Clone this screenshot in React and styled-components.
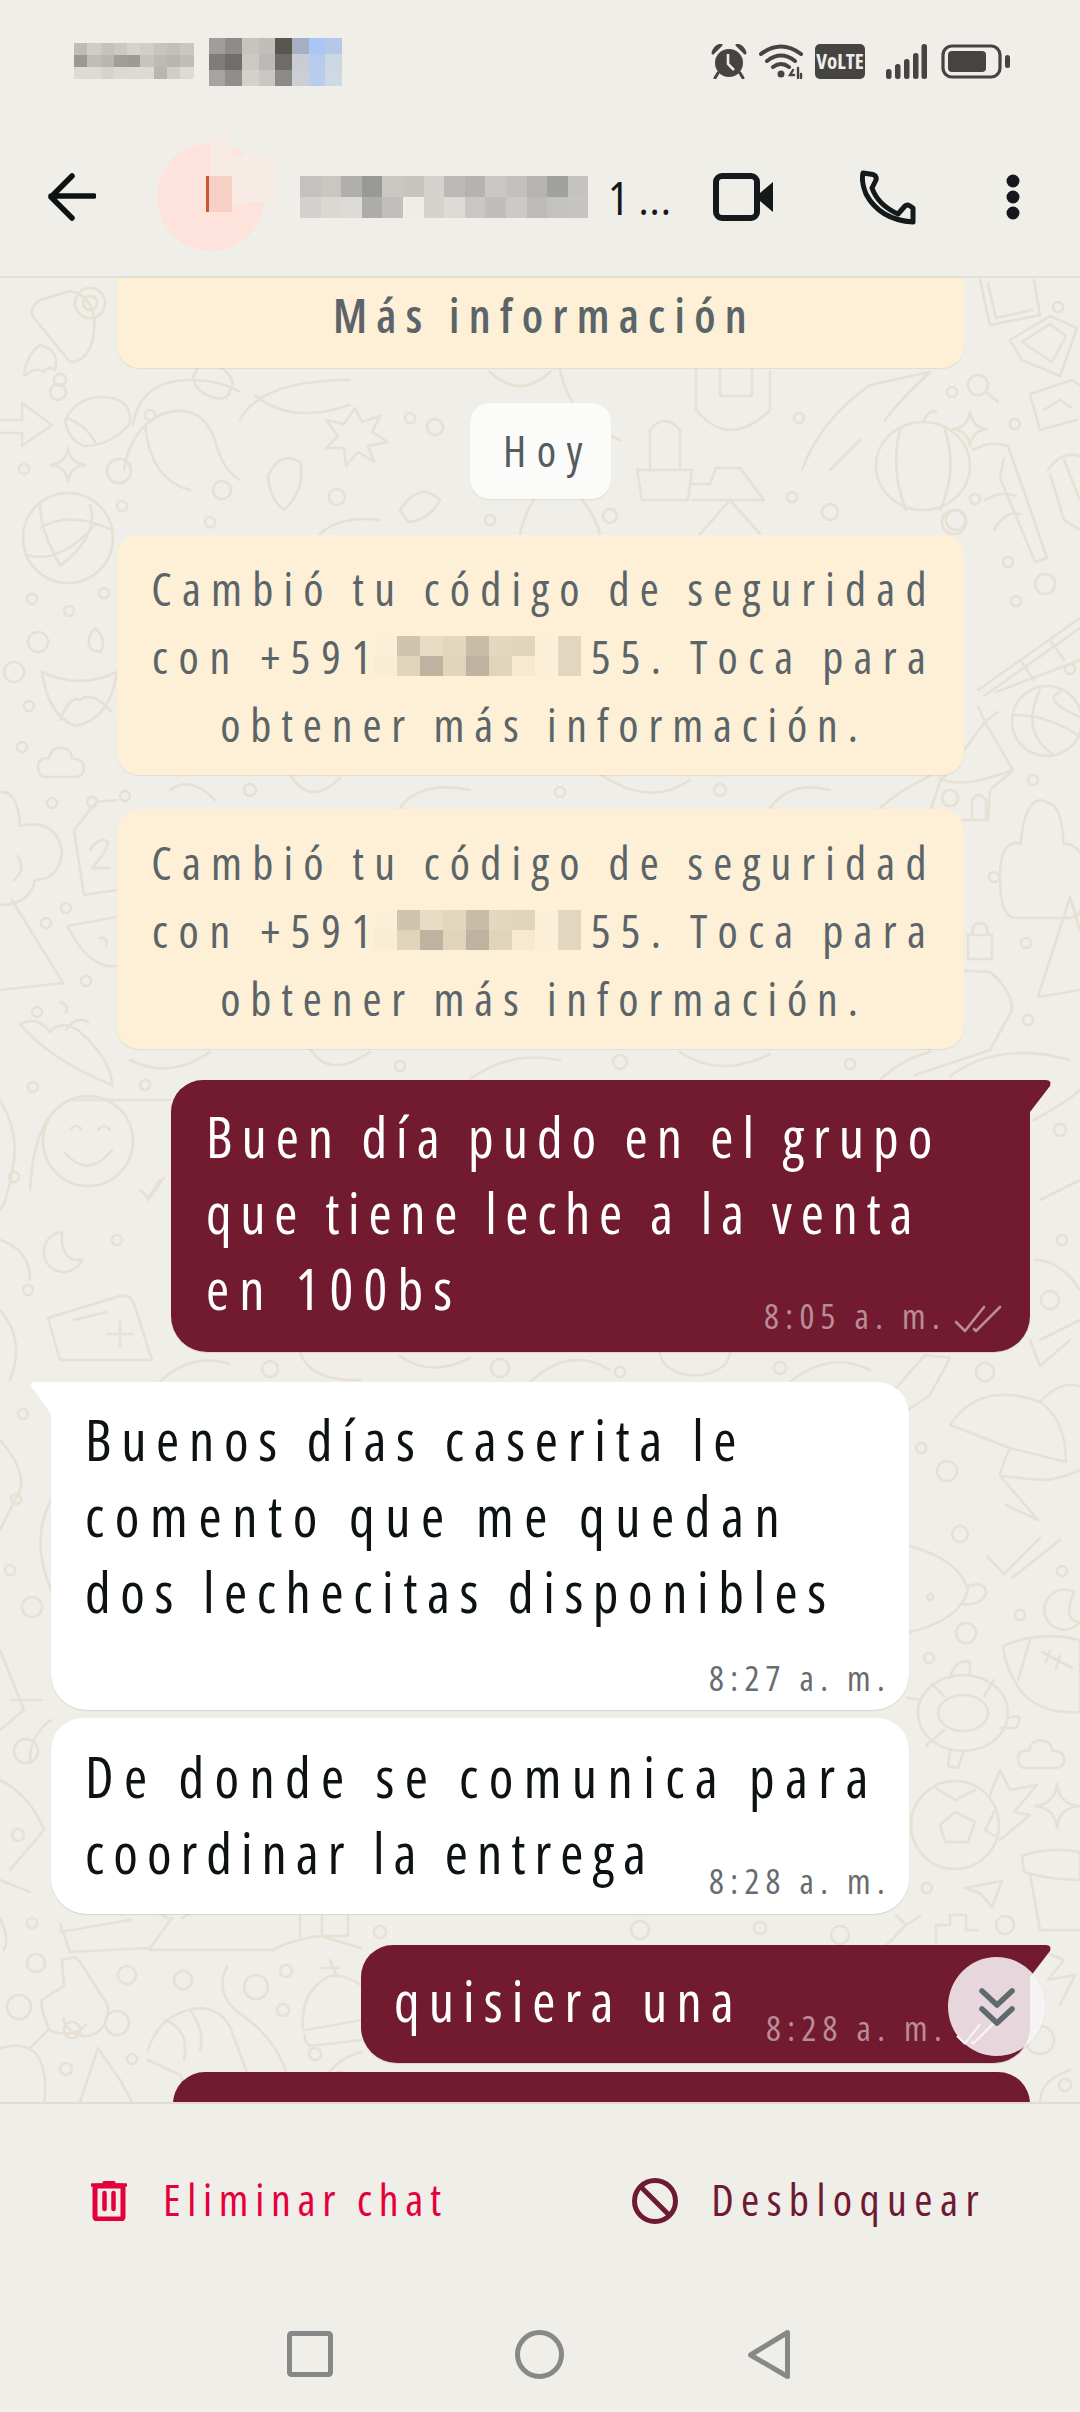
import React from "react";
import styled, { createGlobalStyle } from "styled-components";

const Global = createGlobalStyle`
  html, body { margin: 0; padding: 0; background: #f0eee8; }
  * { box-sizing: border-box; }
`;
const FONT = `"Open Sans", "Liberation Sans", sans-serif`;

const Phone = styled.div`
  width: 1080px; height: 2412px; overflow: hidden; background: #f0eee8;
  display: flex; flex-direction: column; font-family: ${FONT}; font-stretch: 75%;
`;
const StatusBar = styled.div`
  height: 125px; flex: none; display: flex; align-items: flex-start;
  padding: 38px 70px 0 74px;
`;
const StatusIcons = styled.div`
  margin-left: auto; padding-top: 6px; display: flex; align-items: center;
`;
const StatusSlot = styled.div`
  margin-left: ${p => p.$gap || 0}px; display: flex; height: 35px; align-items: center;
`;
const VolteBadge = styled.div`
  width: 50px; height: 35px; border-radius: 5px; background: #464442; color: #f0eee8;
  font-weight: 700; font-size: 21px; line-height: 35px; text-align: center;
`;
const Mosaic = styled.div`
  display: grid;
  grid-template-columns: repeat(${p => p.$cols}, ${p => p.$w}px);
  grid-auto-rows: ${p => p.$h}px;
  flex: none;
  margin: ${p => p.$margin || "0"};
`;
const Cell = styled.div`background: ${p => p.$c};`;

const Header = styled.div`
  height: 153px; flex: none; display: flex; align-items: center;
  border-bottom: 2px solid #e3e0d8; padding-bottom: 7px; position: relative;
`;
const BackSlot = styled.div`margin-left: 48px; display: flex;`;
const Avatar = styled.div`
  width: 108px; height: 108px; border-radius: 50%; background: #fde3dc;
  margin-left: 61px; position: relative; flex: none;
`;
const AvatarHalo = styled.div`
  position: absolute; left: 53px; top: -11px; width: 68px; height: 78px;
  background: #f5ebe5;
  clip-path: polygon(0 0, 32% 0, 32% 30%, 100% 30%, 100% 90%, 60% 90%, 0 100%);
  opacity: .9;
`;
const AvatarMark = styled.div`
  position: absolute; left: 49px; top: 33px; width: 26px; height: 36px;
  border-left: 3px solid #c75a35; background: #f8cfc4;
`;
const NameRow = styled.div`margin-left: 35px; display: flex; align-items: center; flex: none;`;
const NameTail = styled.div`
  margin-left: 20px; width: 59px; font-size: 46px; line-height: 46px; color: #14181a; letter-spacing: 1px; white-space: nowrap;
`;
const HeaderIcon = styled.div`margin-left: ${p => p.$gap}px; display: flex; flex: none;`;

const Chat = styled.div`
  flex: 1; min-height: 0; overflow: hidden; position: relative;
  display: flex; flex-direction: column;
`;
const Wallpaper = styled.svg`
  position: absolute; left: 0; top: 0; width: 1080px; height: 1824px;
  fill: none; stroke: #e7e0d4; stroke-width: 2.6; stroke-linecap: round; stroke-linejoin: round;
`;
const Card = styled.div`
  position: relative; align-self: center; width: 847px; flex: none; background: #fdf0d6;
  color: #5b6468; text-align: center; font-size: 46px; line-height: 68px;
  font-weight: ${p => (p.$bold ? 600 : 400)};
  border-radius: ${p => (p.$clipped ? "0 0 22px 22px" : "22px")};
  padding: ${p => p.$pad};
  margin-top: ${p => p.$mt}px;
  box-shadow: 0 1px 1px rgba(120, 110, 90, .14);
`;
const DayPill = styled.div`
  position: relative; align-self: center; flex: none; width: 141px; height: 96px; margin-top: 35px;
  background: #fbfbfa; border-radius: 20px; color: #545c60;
  font-size: 44px; line-height: 44px; text-align: center; padding: 25px 0 0 16px; letter-spacing: 10.5px;
  box-shadow: 0 1px 1px rgba(120, 110, 90, .14);
`;
const Line = styled.div`
  white-space: nowrap; letter-spacing: ${p => p.$ls}px;
`;
const CodeLine = styled.div`
  display: flex; justify-content: center; align-items: center; white-space: nowrap;
`;
const CodePart = styled.span`letter-spacing: ${p => p.$ls}px;`;
const Row = styled.div`
  position: relative; display: flex; flex: none; margin-top: ${p => p.$mt}px;
  justify-content: ${p => (p.$out ? "flex-end" : "flex-start")};
  padding: 0 50px 0 51px;
`;
const Bubble = styled.div`
  position: relative; width: ${p => p.$width}px; flex: none;
  min-height: ${p => p.$minH || 0}px;
  background: ${p => (p.$out ? "#721b30" : "#ffffff")};
  color: ${p => (p.$out ? "#ffffff" : "#0d1214")};
  font-size: 56px; line-height: 76px;
  padding: ${p => p.$pad};
  border-radius: ${p => (p.$tail ? (p.$out ? "32px 0 36px 36px" : "0 32px 36px 36px") : "32px 32px 36px 36px")};
  box-shadow: 0 1px 1px rgba(90, 80, 70, .16);
  ${p => p.$tail && `
    &::after {
      content: ""; position: absolute; top: 0; width: 22px; height: 34px; background: inherit;
      ${p.$out
        ? `left: 100%; clip-path: path('M0 0 H16 Q22 0 20 6 L0 32 Z');`
        : `right: 100%; clip-path: path('M22 0 H5 Q1 0 2 4 L22 32 Z');`}
    }`}
`;
const LastRow = styled.div`display: flex; justify-content: space-between; align-items: flex-end;`;
const Meta = styled.div`
  display: flex; align-items: flex-end; flex: none;
  font-size: 35px; line-height: 34px; white-space: nowrap; letter-spacing: 6.3px;
  color: ${p => (p.$out ? "#b98c97" : "#666c6f")};
  margin: ${p => p.$margin};
`;
const Ticks = styled.svg`
  margin-left: 8px; flex: none; fill: none; stroke-width: 2.6; stroke-linecap: round; stroke-linejoin: round;
  stroke: ${p => p.$c};
`;
const Fab = styled.div`
  position: absolute; left: 948px; top: 1679px; width: 97px; height: 99px; border-radius: 50%;
  background: rgba(248, 243, 246, .87); display: flex; align-items: center; justify-content: center;
  box-shadow: 0 1px 2px rgba(0, 0, 0, .08);
`;
const ActionBar = styled.div`
  height: 196px; flex: none; border-top: 2px solid #e0dcd4; display: flex; align-items: center;
  padding: 0 94px 0 91px;
`;
const Action = styled.div`
  display: flex; align-items: center; gap: ${p => p.$gap}px; color: ${p => p.$c};
  font-size: 44px; line-height: 44px; letter-spacing: ${p => p.$ls}px; white-space: nowrap;
  margin-left: ${p => (p.$end ? "auto" : "0")};
`;
const ActionLabel = styled.span`margin-bottom: 4px;`;
const NavBar = styled.div`
  height: 114px; flex: none; display: flex; align-items: center; padding: 0 0 2px 287px;
`;
const NavSlot = styled.div`display: flex; margin-left: ${p => p.$gap || 0}px;`;

const star4 = (x, y, s) =>
  `M${x} ${y - s}Q${x + 2} ${y - 2} ${x + s} ${y}Q${x + 2} ${y + 2} ${x} ${y + s}Q${x - 2} ${y + 2} ${x - s} ${y}Q${x - 2} ${y - 2} ${x} ${y - s}Z`;
const cloud = (x, y, w, h) =>
  `M${x + w * .18} ${y + h}Q${x} ${y + h} ${x} ${y + h * .68}Q${x} ${y + h * .38} ${x + w * .24} ${y + h * .42}Q${x + w * .3} ${y} ${x + w * .56} ${y + h * .1}Q${x + w * .72} ${y + h * .12} ${x + w * .74} ${y + h * .42}Q${x + w} ${y + h * .42} ${x + w} ${y + h * .72}Q${x + w} ${y + h} ${x + w * .8} ${y + h}Z`;

const DOTS = [
  [24,469,5],[58,392,8],[119,471,12],[122,506,5],[32,599,5],[69,611,5],[104,593,5],[38,642,10],[14,672,10],[29,706,5],[22,747,5],[52,803,5],
  [66,908,5],[46,923,5],[86,981,5],[37,1012,5],[33,1087,5],[145,1085,5],
  [952,392,5],[1058,307,5],[1015,424,5],[975,499,5],[956,520,10],[1008,562,5],[1045,584,10],[1016,601,5],[1070,669,5],[1033,780,5],[994,877,5],[1026,943,5],[1028,1020,5],
  [410,418,5],[435,427,8],[222,490,9],[337,497,8],[792,497,5],[830,512,8],[799,418,5],[954,522,12],[150,415,5],[60,380,6],
  [985,1372,9],[921,1448,5],[947,1471,10],[960,1534,8],[1020,1615,5],[966,1633,10],[1062,1571,5],[929,1658,5],[927,1888,5],[1005,1925,9],
  [23,1414,5],[16,1499,5],[10,1570,5],[32,1607,10],[26,1751,12],[18,1835,6],[32,1923,5],[36,1963,9],[19,2007,12],[117,2023,12],[127,1975,9],[183,1980,9],[256,1987,12],[286,1971,6],[283,2010,6],[132,2059,5],[66,2069,6],[315,2054,6],
  [14,1177,5],[117,1240,5],[28,1290,5],[1060,1130,6],[1050,1300,9],[1062,1240,5],[270,1369,8],[620,1372,5],[780,1368,6],[500,1368,9],
  [380,1932,6],[640,1930,9],[760,1928,6],[840,1935,9],[1040,2040,14],[1065,2085,6],[250,790,6],[560,792,5],[720,790,6],[850,1064,5],[400,1066,5],[620,1062,7],[490,520,5],[610,516,7],[210,522,5]
];

const PATHS = [
  "M34 318Q28 308 40 300L70 291Q100 298 93 338Q88 362 70 362Z","M24 376Q26 355 40 345Q60 350 55 370Q48 365 44 372Q36 366 24 376Z",
  "M90 288a15 15 0 1 0 .1 0M90 296a7 7 0 1 0 .1 0",
  "M0 420H22V403L52 425L22 446V433H0","M65 420Q80 392 112 398Q132 402 130 424Q110 446 84 446Q68 440 65 420Z M66 418Q86 424 96 444","M133 425Q140 380 190 380Q220 380 240 392M145 425Q150 480 190 490",
  star4(68,465,17), star4(970,429,17), star4(1057,1806,22),
  "M23 538a45 45 0 1 0 90 0a45 45 0 1 0 -90 0ZM40 528Q70 510 112 530M27 555Q60 565 96 524M60 565Q40 530 40 504M90 505Q100 535 60 566",
  "M42 672Q80 690 117 672Q110 720 75 726Q48 715 42 672ZM92 650Q84 640 95 628Q108 640 100 652ZM60 720Q70 695 80 700Q92 690 112 712",
  cloud(38,745,46,32), cloud(1018,1738,46,30),
  "M0 792Q18 790 20 826Q55 818 62 850Q60 880 35 880Q30 905 0 905M18 856Q26 870 14 880",
  "M74 830L96 802L117 800M74 830L84 895L117 890M90 850Q100 835 108 842Q108 850 92 868H110","M92 797a5 5 0 1 0 .1 0M125 791a5 5 0 1 0 .1 0",
  "M12 900L63 983L0 990",
  "M67 926Q90 970 117 966M67 926L117 917M100 938Q108 936 106 946",
  "M20 1024Q50 1060 112 1085Q112 1060 78 1030Q60 1020 50 1032Q38 1015 20 1024ZM66 1012Q70 1006 60 1002","M66 1030Q76 1015 88 1022",
  "M43 1141a45 45 0 1 0 90 0a45 45 0 1 0 -90 0ZM64 1152Q88 1180 112 1150M70 1130q6 -8 12 0M98 1130q6 -8 12 0","M30 1190Q34 1115 70 1100L170 1100",
  "M0 1100Q18 1130 14 1160Q8 1200 0 1210",
  "M140 1190L148 1198L160 1180M148 1200L164 1178","M62 1232a20 20 0 1 0 20 28Q60 1262 62 1232Z",
  "M48 1318L120 1296Q130 1294 134 1304L152 1360H60ZM74 1320L106 1312M108 1334H132M120 1322V1346",
  "M0 1240Q30 1250 30 1280","M0 1310Q26 1340 10 1380",
  "M980 280L990 325L1040 315L1034 280M988 284L996 318L1032 310","M1010 340L1050 316L1077 328L1060 376L1022 360ZM1022 342L1050 324L1066 336L1052 362Z",
  "M968 385a10 10 0 1 0 20 0a10 10 0 1 0 -20 0M986 392L998 402",
  "M1030 394L1072 380L1080 385M1030 394L1040 430L1076 420M1044 410L1060 400L1072 408",
  "M876 466a47 44 0 1 0 94 0a47 44 0 1 0 -94 0ZM900 430Q890 470 906 510M945 430Q958 470 940 510M923 422Q930 408 936 412",
  "M973 450Q990 440 1008 446L1034 520L1047 558L1035 562L1000 478L1004 458M985 500Q1000 490 1016 496M994 530Q1006 510 1020 514",
  "M1048 470Q1062 450 1080 456M1050 474L1064 520L1080 530M1064 460L1080 500",
  "M978 690L1080 618M984 696L1080 628M1050 640L1064 660M1020 660L1034 680","M996 692L1080 660",
  "M1012 721a35 35 0 1 0 70 0M1012 721a35 35 0 1 1 70 0M1014 715Q1050 715 1082 738M1040 690Q1020 730 1052 754M1060 692Q1040 700 1082 718",
  "M927 820L940 782L985 722L1013 770L990 790L988 820ZM985 722L978 706M985 722L998 712M950 790a8 8 0 1 0 .1 0M972 820V800Q978 790 986 800V820","M940 778Q960 790 1012 770",
  cloud(1000,790,86,128),
  "M1038 997L1070 897L1080 930M1038 997L1080 990",
  "M968 935h24v24h-24zM972 935q0 -12 8 -12q8 0 8 12",
  "M912 968L990 972Q1012 990 1012 1010L990 1050L915 1075","M900 1030L930 1050",
  "M950 1076Q1000 1040 1070 1060",
  "M196 372a20 12 30 1 0 34 18a20 12 30 1 0 -34 -18Z","M124 470Q130 430 160 415Q200 400 215 440Q222 470 240 480","M240 420Q260 380 350 380M255 395Q290 425 350 405",
  "M355 408L362 422L380 416L372 432L388 442L368 446L374 462L358 452L346 466L344 448L326 448L338 436L326 420L344 424Z",
  "M268 476Q280 450 300 462Q306 490 284 510Q270 500 268 476Z","M400 510Q420 480 440 500Q430 520 408 522Z",
  "M637 470H692L688 500H642ZM650 470V430Q664 412 680 430V470","M692 500H764L740 468H716L710 484H692","M696 370V410Q730 450 770 410V372M720 370V396H752V370",
  "M802 470Q820 420 870 385L930 372Q900 400 885 420M830 470L860 440","M560 370Q570 420 620 440M490 372Q520 400 550 372",
  "M520 534Q530 490 560 480Q590 500 600 534","M700 534L730 500L760 534","M320 534Q340 515 380 520",
  "M170 790Q190 775 215 800M290 774Q310 808 340 778M400 808Q420 780 470 790M600 774Q650 808 690 780M770 808Q790 780 830 790M880 808Q900 790 930 776",
  "M130 1060Q170 1080 210 1052M310 1049Q330 1080 370 1052M470 1079Q510 1050 560 1060M680 1052Q720 1079 770 1054M880 1080Q900 1060 930 1052",
  "M160 1382Q190 1352 230 1364M300 1352Q310 1382 360 1380M400 1356Q430 1378 470 1358M530 1382Q570 1345 610 1370M660 1352a30 20 0 0 0 70 0M790 1382Q830 1350 870 1370",
  "M950 1425Q980 1380 1040 1402Q1066 1420 1066 1462L1010 1448ZM1010 1448Q1000 1470 1000 1476L1040 1480Q1060 1480 1080 1470M1000 1476L1038 1520L1006 1505M1040 1402Q1060 1380 1080 1386",
  "M890 1395L925 1355L950 1358L930 1395L905 1412","M1030 1340L1040 1366L1070 1340",
  "M987 1556L1004 1574L1040 1538M1012 1578L1060 1540",
  "M1074 1592a20 20 0 1 0 6 30Q1062 1622 1074 1592Z",
  "M910 1546Q960 1560 968 1590Q960 1620 910 1632M968 1586Q986 1580 986 1594Q980 1606 962 1604","M930 1594a3 3 0 1 0 .1 0",
  "M1003 1646Q1040 1630 1080 1640V1712Q1040 1715 1020 1690Q1005 1668 1003 1646ZM1030 1640L1018 1680M1042 1652L1072 1668M1050 1650L1046 1662M1060 1656L1056 1668",
  "M918 1713a45 38 0 1 0 90 0a45 38 0 1 0 -90 0ZM938 1713a25 18 0 1 0 50 0a25 18 0 1 0 -50 0ZM1008 1718Q1026 1712 1016 1728H1000M950 1678Q955 1658 970 1662L970 1676M950 1750L948 1766L958 1768L964 1750M920 1700L908 1698M944 1696L932 1684M984 1696L994 1680M944 1730L926 1746",
  "M911 1825a44 44 0 1 0 88 0a44 44 0 1 0 -88 0ZM940 1825L955 1812L975 1822L968 1842H945ZM936 1788L955 1800L975 1790M995 1810L985 1830L998 1838","M990 1795L1000 1770L1010 1790L1037 1785L1014 1812L1030 1815L1000 1840",
  "M965 1888L1002 1881L992 1907L980 1893Z","M1022 1856Q1050 1846 1080 1852V1880Q1050 1880 1024 1872ZM1030 1874L1040 1930H1080",
  "M882 1950L906 1925L896 1915M906 1925L920 1916","M936 1945V1925H950V1915H966V1930H978","M1040 1950L1064 1960L1048 1980L1075 1975L1060 2005","M1070 2070Q1040 2080 1040 2102",
  "M63 2018a22 24 0 1 0 44 -14L80 1962L75 1957L62 1960L64 1986L42 2000Q40 2010 50 2030Q70 2040 86 2025M72 2022a8 8 0 1 0 .1 0M48 2030L30 2048","M0 2048Q30 2040 40 2060Q48 2080 44 2102","M98 2048L120 2080L132 2102M98 2048L80 2102",
  "M148 2050Q160 2012 200 2008Q226 2010 233 2035L258 2102M165 2020Q190 2030 184 2060M190 2010Q205 2030 200 2050M148 2060L180 2075L195 2102",
  "M227 1967Q215 1990 235 2010Q280 2040 288 2080L280 2102",
  "M303 2030Q300 1990 330 1976Q345 1974 361 1985M306 2030L361 2020M305 2035Q303 2040 310 2046L361 2040M330 1960l6 14M322 1968l16 0",
  "M60 1924L70 1952L150 1948L172 1918M150 1950L273 1950Q290 1940 320 1936L361 1948M300 1936V1916M322 1916V1936H348V1916","M182 1918a18 14 0 1 0 -14 0","M0 1918Q10 1940 4 1950","M60 1932L130 1920",
  "M310 2100Q330 2060 361 2052M340 2072a12 12 0 1 0 .1 0",
  "M0 1440Q26 1470 20 1490L0 1530","M0 1650L24 1710L0 1730","M51 1500Q30 1540 51 1590","M0 1780Q30 1795 44 1830L10 1870","M51 1720Q30 1735 30 1760","M12 1700h30","M0 1880L30 1892",
  "M1034 1120Q1070 1100 1080 1090","M1040 1200L1080 1180M1036 1260Q1060 1260 1080 1290","M1040 1340L1080 1320",
];

const Doodles = () => (
  <Wallpaper viewBox="0 278 1080 1824" aria-hidden="true">
    {PATHS.map((d, i) => <path key={i} d={d} />)}
    {DOTS.map(([x, y, r], i) => <circle key={i} cx={x} cy={y} r={r} />)}
  </Wallpaper>
);

const Pixelated = ({ cols, w, h, colors, margin }) => (
  <Mosaic $cols={cols} $w={w} $h={h} $margin={margin}>
    {colors.map((c, i) => <Cell key={i} $c={c} />)}
  </Mosaic>
);

const CLOCK_A = ["#bdbcb7","#cfcdc8","#c4c2bd","#cbc9c4","#d5d3ce","#d0cec9","#c7c5c0","#c2c0bb","#c9c7c2","#9a9994","#bfbdb8","#b9b7b2","#9f9e99","#9c9b96","#c6c4bf","#bcbab5","#b8b6b1","#bfbdb8","#dddbd6","#dddbd6","#d5d3ce","#dbd9d4","#dddbd6","#dcdad5","#b8b6b1","#d0cec9","#dddbd6"];
const CLOCK_B = ["#9f9e9a","#8d8c88","#c6c4bf","#c0beb9","#57564f","#a5b0c2","#aac6f6","#b5c9e6","#7e7d79","#6f6e6a","#cbc9c4","#bcbab6","#6d6c68","#c9cdd3","#b6cbef","#cdd7e3","#a5a4a0","#8f8e8a","#d3d1cc","#c9c7c2","#8b8a86","#cbcfd5","#b8cdee","#cfd9e4"];
const NAME_M = ["#c3c2be","#c8c7c2","#b0afab","#999995","#c9c8c3","#c6c5c0","#d4d3ce","#bab9b5","#b4b3af","#c9c8c4","#c2c1bd","#b5b4b0","#a0a09c","#c4c3bf","#d2d1cd","#d9d8d3","#dcdbd6","#adaca8","#c0bfbb","#efede7","#d4d3ce","#dbdad5","#c9c8c4","#bfbeba","#cbcac6","#bcbbb7","#c3c2be","#c6c5c1"];
const CODE_M = ["#fcefd7","#cfc5ae","#e8ddc4","#e3d8be","#c8bda6","#e3d8be","#e0d5bb","#fcefd7","#e2d7be","#faedd5","#e0d5bb","#bdb3a0","#e0d5bb","#bdb3a0","#e0d5bb","#f6e9d0","#fcefd7","#e2d7be"];

const Arrow = () => (
  <svg width="48" height="48" viewBox="0 0 48 48" fill="none" stroke="#0d1214" strokeWidth="5.5" strokeLinecap="round" strokeLinejoin="round">
    <path d="M24 3L3 24L24 45M3 23H46" />
  </svg>
);
const VideoIcon = () => (
  <svg width="61" height="48" viewBox="0 0 61 48" fill="none">
    <rect x="3" y="3" width="41" height="42" rx="6" stroke="#14191b" strokeWidth="6" />
    <path d="M47 20L60 9V39L47 28Z" fill="#14191b" />
  </svg>
);
const PhoneIcon = () => (
  <svg width="56" height="55" viewBox="0 0 56 55" fill="none" stroke="#14191b" strokeWidth="5" strokeLinejoin="round">
    <path d="M3 3L13 4.5Q17 6 16 10L12 18Q18 35 38 44L45 36Q47 34 50 36L53 38V52Q20 50 6 24Q1 12 3 3Z" />
  </svg>
);
const Kebab = () => (
  <svg width="14" height="46" viewBox="0 0 14 46" fill="#15191b">
    <circle cx="7" cy="7" r="6.5" /><circle cx="7" cy="23" r="6.5" /><circle cx="7" cy="39" r="6.5" />
  </svg>
);
const ST = "#464442";
const AlarmIcon = () => (
  <svg width="36" height="35" viewBox="0 0 36 35">
    <circle cx="18" cy="19" r="14" fill={ST} />
    <path d="M2 9Q4 2 10 1L2 9ZM34 9Q32 2 26 1Z" fill={ST} stroke={ST} strokeWidth="3" strokeLinejoin="round" />
    <path d="M7 29L4 34M29 29L32 34" stroke={ST} strokeWidth="3" strokeLinecap="round" />
    <path d="M17 10V20L23 26" fill="none" stroke="#f0eee8" strokeWidth="2.6" />
  </svg>
);
const WifiIcon = () => (
  <svg width="45" height="35" viewBox="0 0 45 35" fill="none" stroke={ST} strokeWidth="4" strokeLinecap="round">
    <path d="M2 10Q22 -5 42 10M8 17Q22 6 36 17M14 23Q22 17 30 23" />
    <circle cx="22" cy="30" r="3.5" fill={ST} stroke="none" />
    <path d="M34 26L31 31H35M39 24V34M42 30V34" strokeWidth="2.4" />
  </svg>
);
const SignalIcon = () => (
  <svg width="41" height="35" viewBox="0 0 41 35" fill={ST}>
    <rect x="0" y="25" width="5.5" height="10" rx="2.5" /><rect x="9" y="20" width="5.5" height="15" rx="2.5" />
    <rect x="18" y="15" width="5.5" height="20" rx="2.5" /><rect x="27" y="9" width="5.5" height="26" rx="2.5" />
    <rect x="35.5" y="0" width="5.5" height="35" rx="2.5" />
  </svg>
);
const BatteryIcon = () => (
  <svg width="69" height="35" viewBox="0 0 69 35" fill="none">
    <rect x="2" y="2" width="57" height="31" rx="9" stroke={ST} strokeWidth="3.2" />
    <rect x="7" y="7" width="38" height="21" rx="4" fill={ST} />
    <rect x="64" y="11" width="5" height="13" rx="2.5" fill={ST} />
  </svg>
);
const TickMark = ({ c, w = 48 }) => (
  <Ticks $c={c} width={w} height={(w * 28) / 48} viewBox="0 0 48 28">
    <path d="M2 17L11 26L30 2M20 24L22 26L46 2" />
  </Ticks>
);
const Chevrons = () => (
  <svg width="36" height="38" viewBox="0 0 36 38" fill="none" stroke="#5f6a6e" strokeWidth="5.5" strokeLinecap="round" strokeLinejoin="round">
    <path d="M3 3L18 17L33 3M3 21L18 35L33 21" />
  </svg>
);
const TrashIcon = () => (
  <svg width="36" height="40" viewBox="0 0 36 40" fill="none" stroke="#e4003c" strokeLinecap="round">
    <path d="M1 4H35" strokeWidth="3.5" /><path d="M13 1.5H23" strokeWidth="3" />
    <rect x="4" y="5" width="28" height="33" rx="2" strokeWidth="5" />
    <path d="M13.5 12V28M22.5 12V28" strokeWidth="4.5" />
  </svg>
);
const BanIcon = () => (
  <svg width="46" height="46" viewBox="0 0 46 46" fill="none" stroke="#6e1a33" strokeWidth="5">
    <circle cx="23" cy="23" r="20.5" /><path d="M9 9L37 37" />
  </svg>
);
const NavSquare = () => (
  <svg width="46" height="46" viewBox="0 0 46 46" fill="none" stroke="#888" strokeWidth="5">
    <rect x="2.5" y="2.5" width="41" height="41" rx="2" />
  </svg>
);
const NavCircle = () => (
  <svg width="49" height="49" viewBox="0 0 49 49" fill="none" stroke="#888" strokeWidth="5">
    <circle cx="24.5" cy="24.5" r="22" />
  </svg>
);
const NavBack = () => (
  <svg width="42" height="49" viewBox="0 0 42 49" fill="none" stroke="#888" strokeWidth="5" strokeLinejoin="round">
    <path d="M39.5 2.5V46.5L2.5 25Z" />
  </svg>
);

const SecurityCard = ({ mt }) => (
  <Card $mt={mt} $pad="19px 0 17px 8px">
    <Line $ls={10.2}>Cambió tu código de seguridad</Line>
    <CodeLine>
      <CodePart $ls={10.8}>con +591</CodePart>
      <Pixelated cols={9} w={23} h={20} colors={CODE_M} margin="0 10px 0 -8px" />
      <CodePart $ls={10.3}>55. Toca para</CodePart>
    </CodeLine>
    <Line $ls={9.9}>obtener más información.</Line>
  </Card>
);

export default function App() {
  return (
    <Phone>
      <Global />
      <StatusBar>
        <Pixelated cols={9} w={13.3} h={12} colors={CLOCK_A} margin="5px 15px 0 0" />
        <Pixelated cols={8} w={16.7} h={16} colors={CLOCK_B} />
        <StatusIcons>
          <StatusSlot><AlarmIcon /></StatusSlot>
          <StatusSlot $gap={12}><WifiIcon /></StatusSlot>
          <StatusSlot $gap={11}><VolteBadge>VoLTE</VolteBadge></StatusSlot>
          <StatusSlot $gap={21}><SignalIcon /></StatusSlot>
          <StatusSlot $gap={14}><BatteryIcon /></StatusSlot>
        </StatusIcons>
      </StatusBar>
      <Header>
        <BackSlot><Arrow /></BackSlot>
        <Avatar><AvatarHalo /><AvatarMark /></Avatar>
        <NameRow>
          <Pixelated cols={14} w={20.6} h={21} colors={NAME_M} />
          <NameTail>1 ...</NameTail>
        </NameRow>
        <HeaderIcon $gap={46}><VideoIcon /></HeaderIcon>
        <HeaderIcon $gap={86}><PhoneIcon /></HeaderIcon>
        <HeaderIcon $gap={90}><Kebab /></HeaderIcon>
      </Header>
      <Chat>
        <Doodles />
        <Card $clipped $bold $mt={0} $pad="3px 0 19px 9px"><Line $ls={9.3}>Más información</Line></Card>
        <DayPill>Hoy</DayPill>
        <SecurityCard mt={36} />
        <SecurityCard mt={34} />
        <Row $out $mt={31}>
          <Bubble $out $tail $width={859} $pad="18px 28px 26px 35px">
            <Line $ls={9}>Buen día pudo en el grupo</Line>
            <Line $ls={8.7}>que tiene leche a la venta</Line>
            <LastRow>
              <Line $ls={10.2}>en 100bs</Line>
              <Meta $out $margin="0 0 -7px">8:05 a. m.<TickMark c="#b98c97" /></Meta>
            </LastRow>
          </Bubble>
        </Row>
        <Row $mt={30}>
          <Bubble $tail $width={858} $pad="19px 18px 15px 34px">
            <Line $ls={9.7}>Buenos días caserita le</Line>
            <Line $ls={10.6}>comento que me quedan</Line>
            <Line $ls={9.6}>dos lechecitas disponibles</Line>
            <LastRow><span /><Meta $margin="32px 0 0">8:27 a. m.</Meta></LastRow>
          </Bubble>
        </Row>
        <Row $mt={8}>
          <Bubble $width={858} $pad="20px 18px 24px 34px">
            <Line $ls={10.4}>De donde se comunica para</Line>
            <LastRow>
              <Line $ls={9}>coordinar la entrega</Line>
              <Meta $margin="0 0 -8px">8:28 a. m.</Meta>
            </LastRow>
          </Bubble>
        </Row>
        <Row $out $mt={31}>
          <Bubble $out $tail $width={669} $pad="17px 36px 25px 33px">
            <LastRow>
              <Line $ls={9.1}>quisiera una</Line>
              <Meta $out $margin="0 0 -7px">8:28 a. m.<TickMark c="#ffffff" w={38} /></Meta>
            </LastRow>
          </Bubble>
        </Row>
        <Row $out $mt={9}>
          <Bubble $out $width={857} $minH={120} $pad="0" />
        </Row>
        <Fab><Chevrons /></Fab>
      </Chat>
      <ActionBar>
        <Action $c="#e4003c" $gap={36} $ls={6.7}><TrashIcon /><ActionLabel>Eliminar chat</ActionLabel></Action>
        <Action $end $c="#6e1a33" $gap={33} $ls={7.4}><BanIcon /><ActionLabel>Desbloquear</ActionLabel></Action>
      </ActionBar>
      <NavBar>
        <NavSlot><NavSquare /></NavSlot>
        <NavSlot $gap={182}><NavCircle /></NavSlot>
        <NavSlot $gap={184}><NavBack /></NavSlot>
      </NavBar>
    </Phone>
  );
}
